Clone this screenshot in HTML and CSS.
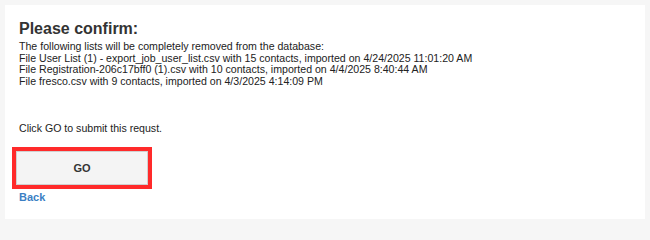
FILE: index.html
```html
<!DOCTYPE html>
<html>
<head>
<meta charset="utf-8">
<link rel="stylesheet" href="styles.css">
</head>
<body>
<div class="panel">
  <h1 class="title">Please confirm:</h1>
  <div class="lines">
    <div>The following lists will be completely removed from the database:</div>
    <div>File User List (1) - export_job_user_list.csv with 15 contacts, imported on 4/24/2025 11:01:20 AM</div>
    <div>File Registration-206c17bff0 (1).csv with 10 contacts, imported on 4/4/2025 8:40:44 AM</div>
    <div>File fresco.csv with 9 contacts, imported on 4/3/2025 4:14:09 PM</div>
  </div>
  <p class="note">Click GO to submit this requst.</p>
  <div class="highlight"><button class="go">GO</button></div>
  <a class="back" href="#">Back</a>
</div>
</body>
</html>
```
FILE: styles.css
```css
html, body {
  margin: 0;
  padding: 0;
  background: #f6f6f6;
}
html {
  height: 222px;
  overflow: hidden;
}
body {
  padding: 5px 5px 3px 5px;
  font-family: "Liberation Sans", Arial, sans-serif;
  color: #222;
}
.panel {
  background: #fff;
  height: 214px;
  box-sizing: border-box;
  padding: 14px 14px 0 14px;
  overflow: hidden;
}
.title {
  margin: 0;
  font-size: 16px;
  font-weight: bold;
  color: #333;
  line-height: 20px;
}
.lines {
  font-size: 10.6px;
  line-height: 11.6px;
  margin-top: 2px;
}
.note {
  font-size: 10.6px;
  margin: 35px 0 0 0;
  line-height: 13px;
}
.highlight {
  margin: 12px 0 0 -7px;
  width: 132px;
  border: 4px solid #ff2a2a;
}
.go {
  display: block;
  width: 132px;
  height: 34px;
  margin: 0;
  border: 1px solid #d0d0d0;
  background: #f4f4f4;
  font-family: "Liberation Sans", Arial, sans-serif;
  font-weight: bold;
  font-size: 11px;
  color: #333;
  box-sizing: border-box;
}
.back {
  display: block;
  width: max-content;
  font-size: 11px;
  line-height: 10px;
  margin-top: 3px;
  font-weight: bold;
  color: #3b7fc4;
  text-decoration: none;
}
```
